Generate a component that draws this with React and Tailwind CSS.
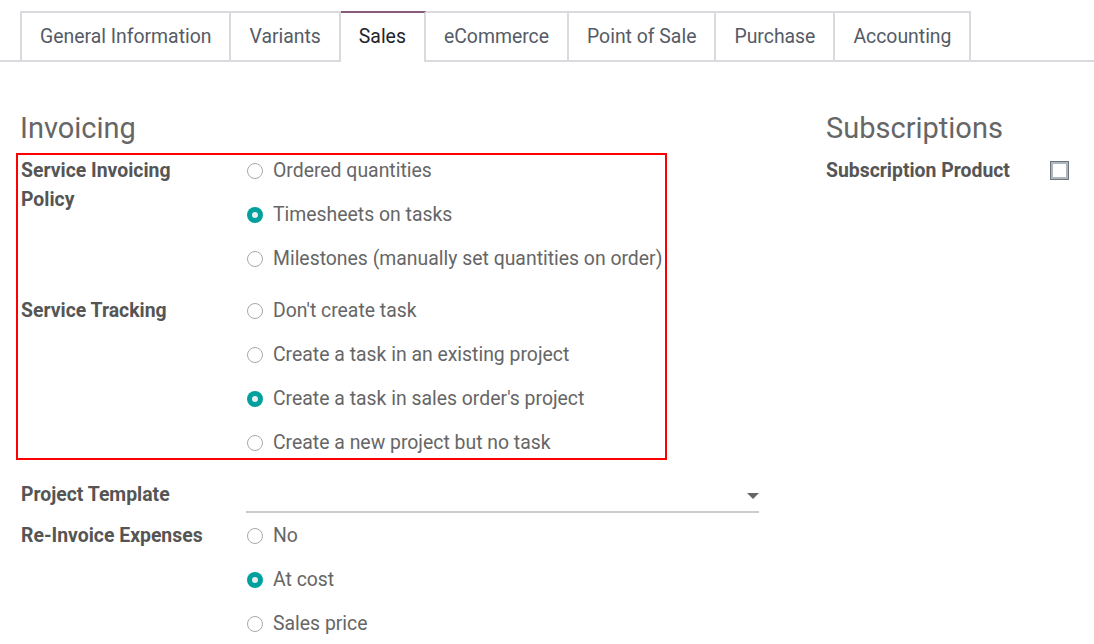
import React from "react";

const tabs = ["General Information", "Variants", "Sales", "eCommerce", "Point of Sale", "Purchase", "Accounting"];

function Radio({ checked, label }) {
  return (
    <div className="flex items-center h-[29px] leading-[29px]">
      {checked ? (
        <span className="ml-[1px] w-[16px] h-[16px] rounded-full bg-[#00a09d] flex items-center justify-center shrink-0">
          <span className="w-[6px] h-[6px] rounded-full bg-[#e9ecef]" />
        </span>
      ) : (
        <span className="ml-[1px] w-[16px] h-[16px] rounded-full border-[1.5px] border-[#a3aab1] bg-white shrink-0" />
      )}
      <span className="ml-[10px] text-[19.4px] text-[#666666] whitespace-nowrap">{label}</span>
    </div>
  );
}

function Field({ label, children, className = "" }) {
  return (
    <div className={"grid grid-cols-[225px_1fr] " + className}>
      <div className="pr-[20px]">
        <div className="max-w-[200px] text-[19.4px] font-bold leading-[29px] text-[#555555]">{label}</div>
      </div>
      <div className="flex flex-col gap-[15px]">{children}</div>
    </div>
  );
}

export default function App() {
  return (
    <div className="w-[1094px] h-[644px] bg-white overflow-hidden font-['Roboto',sans-serif]">
      <div className="flex items-end pt-[11px] pl-[20px] border-b-2 border-[#d8dadd]">
        {tabs.map((t, i) => {
          const active = t === "Sales";
          return (
            <div
              key={t}
              className={
                "flex items-center px-[18px] text-[19.4px] border-t-2 border-r-2 whitespace-nowrap " +
                (i === 0 ? "border-l-2 " : "") +
                (active
                  ? "h-[51px] -mb-[2px] pb-[2px] bg-white border-t-[#875a7b] border-r-[#d8dadd] text-[#212529]"
                  : "h-[49px] border-[#d8dadd] text-[#555b66]")
              }
            >
              {t}
            </div>
          );
        })}
      </div>

      <div className="flex pl-[16px]">
        <div className="w-[744px] shrink-0">
          <h2 className="mt-[48px] pl-[4px] text-[29px] leading-[36px] font-normal text-[#666666]">Invoicing</h2>

          <div className="mt-[7px] w-[651px] border-2 border-[#ff0000] pl-[3px] pt-[1px] pb-[1px]">
            <Field label="Service Invoicing Policy">
              <Radio label="Ordered quantities" />
              <Radio checked label="Timesheets on tasks" />
              <Radio label="Milestones (manually set quantities on order)" />
            </Field>
            <Field label="Service Tracking" className="mt-[23px]">
              <Radio label="Don't create task" />
              <Radio label="Create a task in an existing project" />
              <Radio checked label="Create a task in sales order's project" />
              <Radio label="Create a new project but no task" />
            </Field>
          </div>

          <div className="pl-[5px]">
            <div className="grid grid-cols-[225px_1fr] mt-[20px]">
              <div className="text-[19.4px] font-bold leading-[29px] text-[#555555] whitespace-nowrap">Project Template</div>
              <div className="w-[513px] h-[33px] border-b-2 border-[#cccccc] flex items-center justify-end">
                <svg width="12" height="7" viewBox="0 0 12 7" className="mt-[2px]">
                  <polygon points="0,0 12,0 6,6" fill="#666666" />
                </svg>
              </div>
            </div>
            <Field label="Re-Invoice Expenses" className="mt-[8px]">
              <Radio label="No" />
              <Radio checked label="At cost" />
              <Radio label="Sales price" />
            </Field>
          </div>
        </div>

        <div className="ml-[66px] w-[260px] shrink-0">
          <h2 className="mt-[48px] text-[29px] leading-[36px] font-normal text-[#666666]">Subscriptions</h2>
          <div className="mt-[10px] flex items-center h-[29px]">
            <div className="w-[224px] text-[19.4px] font-bold leading-[29px] text-[#555555] whitespace-nowrap">Subscription Product</div>
            <span className="ml-[1px] w-[17px] h-[17px] border-2 border-[#adb5bd] ring-1 ring-[#6c757d] bg-white" />
          </div>
        </div>
      </div>
    </div>
  );
}
